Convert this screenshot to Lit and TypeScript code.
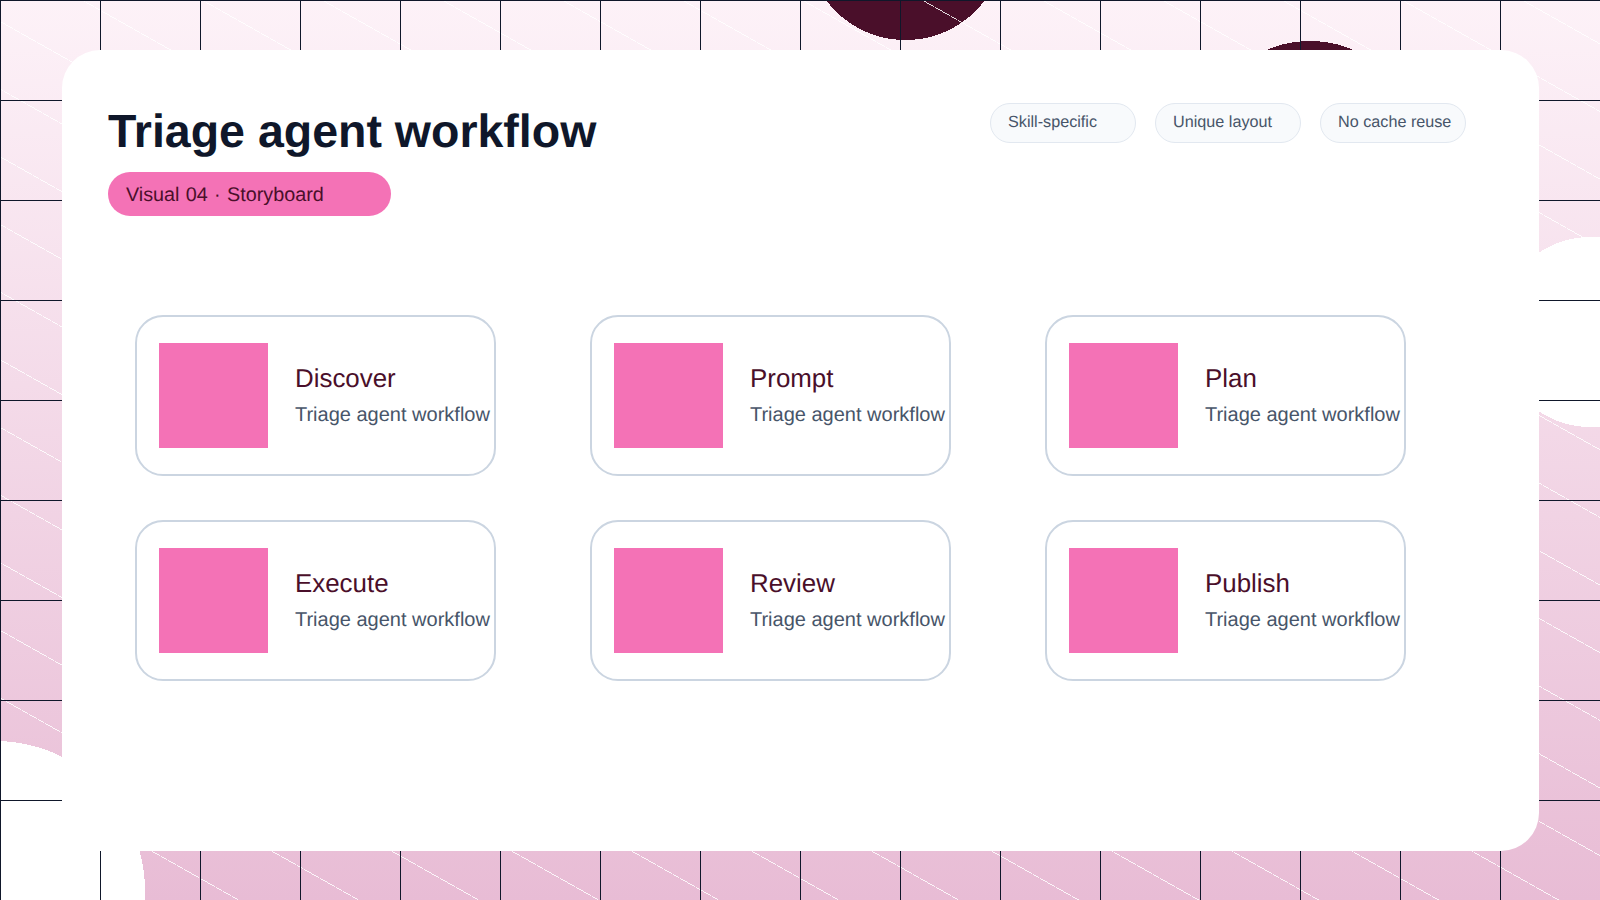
import { LitElement, html, css } from 'lit';
import { customElement } from 'lit/decorators.js';

const CHIPS = ['Skill-specific', 'Unique layout', 'No cache reuse'];
const STEPS = ['Discover', 'Prompt', 'Plan', 'Execute', 'Review', 'Publish'];

@customElement('app-root')
export class AppRoot extends LitElement {
  static styles = css`
    :host {
      display: block;
      box-sizing: border-box;
      width: 1600px;
      height: 900px;
      overflow: hidden;
      padding: 50px 61px 49px 62px;
      font-family: 'Liberation Sans', Arial, sans-serif;
      text-rendering: geometricPrecision;
      background-color: #fdf2f8;
      background-image:
        linear-gradient(to right, #0f172a 1px, transparent 1px),
        linear-gradient(to bottom, #0f172a 1px, transparent 1px),
        repeating-linear-gradient(
          29.41deg,
          transparent 0 57.8px,
          rgba(255, 255, 255, 0.85) 57.8px 58.6px,
          transparent 58.6px 58.93px
        ),
        radial-gradient(circle 99px at 905.5px -59px, #4a0f2a 99px, transparent 99px),
        radial-gradient(circle 110px at 1310px 151px, #4a0f2a 110px, transparent 110px),
        radial-gradient(circle 95px at 1591px 332px, #ffffff 95px, transparent 95px),
        radial-gradient(circle 150px at -5px 891px, #ffffff 150px, transparent 150px),
        linear-gradient(180deg, #fdf2f8, #e8bcd5);
      background-size:
        100px 100px,
        100px 100px,
        auto,
        auto,
        auto,
        auto,
        auto,
        auto;
    }
    .sheet {
      box-sizing: border-box;
      height: 801px;
      background: #fff;
      border-radius: 38px;
      padding: 53px 73px 0 46px;
    }
    .top {
      display: flex;
      justify-content: space-between;
      align-items: flex-start;
    }
    h1 {
      margin: 2px 0 0;
      font-size: 46.5px;
      line-height: 53px;
      font-weight: 700;
      color: #0f172a;
    }
    .pill {
      box-sizing: border-box;
      width: 283px;
      height: 44px;
      margin-top: 14px;
      padding: 12px 18px;
      border-radius: 22px;
      background: #f472b6;
      color: #4a0f2a;
      font-size: 19.8px;
      word-spacing: 0.8px;
      line-height: 22px;
    }
    .chips {
      display: flex;
      gap: 19px;
    }
    .chip {
      box-sizing: border-box;
      width: 146px;
      height: 40px;
      padding: 8px 17px;
      border: 1px solid #e2e8f0;
      border-radius: 20px;
      background: #f8fafc;
      color: #475569;
      font-size: 16.2px;
      line-height: 20px;
      white-space: nowrap;
    }
    .grid {
      display: grid;
      grid-template-columns: repeat(3, 361px);
      grid-auto-rows: 161px;
      gap: 44px 94px;
      margin: 99px 0 0 27.4px;
    }
    .step {
      box-sizing: border-box;
      display: flex;
      align-items: center;
      gap: 27px;
      padding: 0 21.6px;
      border: 2px solid #cbd5e1;
      border-radius: 28px;
      white-space: nowrap;
    }
    .thumb {
      flex: none;
      width: 109px;
      height: 105px;
      background: #f472b6;
    }
    .label {
      color: #4a0f2a;
      font-size: 25.9px;
      line-height: 30px;
    }
    .note {
      margin-top: 10px;
      color: #475569;
      font-size: 20px;
      line-height: 23px;
    }
  `;

  render() {
    return html`
      <main class="sheet">
        <header class="top">
          <div>
            <h1>Triage agent workflow</h1>
            <div class="pill">Visual 04 · Storyboard</div>
          </div>
          <div class="chips">
            ${CHIPS.map((c) => html`<span class="chip">${c}</span>`)}
          </div>
        </header>
        <section class="grid">
          ${STEPS.map(
            (s) => html`
              <article class="step">
                <div class="thumb"></div>
                <div>
                  <div class="label">${s}</div>
                  <div class="note">Triage agent workflow</div>
                </div>
              </article>
            `,
          )}
        </section>
      </main>
    `;
  }
}
